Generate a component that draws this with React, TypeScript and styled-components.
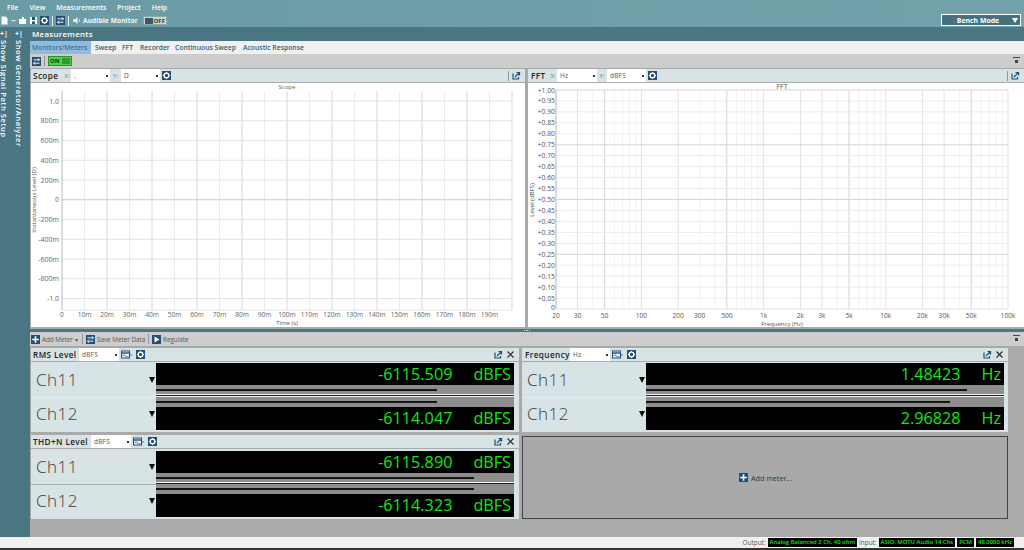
import React from "react";
import styled, { createGlobalStyle } from "styled-components";

const Global = createGlobalStyle`
  html, body { margin: 0; padding: 0; background: #aaa; }
  #root { width: 1024px; height: 550px; overflow: hidden; }
  * { box-sizing: border-box; }
`;
const font = `"Open Sans", "Noto Sans", "Liberation Sans", sans-serif`;

const Page = styled.div`
  width: 1024px; height: 550px; display: flex; flex-direction: column;
  font-family: ${font}; background: #aaa; overflow: hidden;
`;
const TopBand = styled.header`
  height: 27px; flex: none; background: linear-gradient(90deg, #6b9ba5, #73a2ab);
  display: flex; flex-direction: column; position: relative;
`;
const MenuBar = styled.nav`
  height: 14px; display: flex; align-items: center; gap: 11px; padding: 1px 0 0 7px;
  color: #fff; font-size: 6.9px; font-weight: 600;
`;
const QuickBar = styled.div`
  height: 13px; display: flex; align-items: center; gap: 2px; padding-left: 0; color: #f2f6f7;
  font-size: 6.6px; font-weight: 700;
`;
const QuickLabel = styled.span` margin-right: 3px; letter-spacing: .1px; white-space: nowrap; `;
const BenchMode = styled.div`
  position: absolute; right: 3px; top: 14px; width: 80px; height: 12px;
  border: 1px solid #fff; background: #45707c; color: #fff; font-size: 6.9px; font-weight: 700;
  display: flex; align-items: center; justify-content: center; padding-right: 6px;
  &::after { content: ""; position: absolute; right: 2px; top: 3px; border: 3.5px solid transparent; border-top: 5px solid #fff; border-bottom: 0; }
`;
const Sep = styled.span<{ $light?: boolean; $flush?: boolean }>`
  width: 1px; height: 10px; margin: 0 ${p => p.$flush ? 0 : 1}px; flex: none; background: ${p => p.$light ? "#e8eef0" : "#8a9aa0"};
`;
const HeadGap = styled.span` width: 2px; flex: none; `;
const Switch = styled.span<{ $on?: boolean }>`
  width: 24px; height: ${p => p.$on ? 10 : 9}px; display: inline-flex; align-items: center;
  justify-content: space-between; padding: 0 1px; font-size: 6px; font-weight: 700; line-height: 1;
  background: ${p => p.$on ? "#4bd24b" : "#cfd6d8"}; color: ${p => p.$on ? "#0b3d0b" : "#333"};
  border: 1px solid ${p => p.$on ? "#2e8f2e" : "#8aa"};
`;
const SwitchKnob = styled.i<{ $on?: boolean }>`
  width: 8px; height: 6px; background: ${p => p.$on ? "#2b9b2b" : "#3d5660"}; display: block;
`;
const Body = styled.div` flex: 1; min-height: 0; display: flex; `;
const Sidebar = styled.aside`
  width: 30px; flex: none; background: #4a7683; display: flex; padding-top: 3px; color: #fff;
`;
const SideItem = styled.div<{ $w: number }>`
  width: ${p => p.$w}px; flex: none; display: flex; flex-direction: column; align-items: center; gap: 2px;
  font-size: 7.7px; font-weight: 600; letter-spacing: .5px;
`;
const SidePin = styled.span` font-size: 7px; line-height: 8px; font-weight: 700; letter-spacing: 0; `;
const SideText = styled.span` writing-mode: vertical-rl; white-space: nowrap; line-height: 12px; `;
const Main = styled.main` flex: 1; min-width: 0; display: flex; flex-direction: column; `;
const TitleBar = styled.div`
  height: 14px; flex: none; padding-left: 2px; background: #4a7683; color: #fff;
  font-size: 7.9px; font-weight: 600; letter-spacing: .3px; line-height: 14px;
`;
const Tabs = styled.div`
  height: 13px; flex: none; background: #f0f0f0; display: flex; align-items: stretch;
`;
const Tab = styled.div<{ $active?: boolean; $w: number }>`
  width: ${p => p.$w}px; flex: none; padding-left: ${p => p.$active ? 2 : 4}px; line-height: 13px; white-space: nowrap;
  font-size: 6.8px; font-weight: 600; color: ${p => p.$active ? "#4a7283" : "#38606e"};
  background: ${p => p.$active ? "#8fbbe3" : "transparent"};
`;
const MeasureBar = styled.div`
  height: 15px; flex: none; background: #cdcdcd; border-bottom: 1px solid #a4a8a9; display: flex; align-items: center;
  gap: 2px; padding: 0 2px; position: relative;
`;
const ChartsRow = styled.div`
  height: 258px; flex: none; display: flex; gap: 3px; padding-left: 1px; background: #aaa;
`;
const ChartPanel = styled.section<{ $w: number }>`
  width: ${p => p.$w}px; flex: none; display: flex; flex-direction: column; background: #fff;
`;
const PanelHead = styled.div<{ $pad?: number }>`
  height: 14px; flex: none; background: #d8e3e5; border-bottom: 1px solid #a8acae; display: flex; align-items: center;
  padding-left: ${p => p.$pad ?? 2}px; font-size: 8.2px; color: #222; font-weight: 600; letter-spacing: .4px; position: relative;
`;
const HeadTitle = styled.span<{ $w: number }>` width: ${p => p.$w}px; flex: none; white-space: nowrap; `;
const HeadHint = styled.span<{ $w: number }>`
  width: ${p => p.$w}px; flex: none; font-size: 6px; color: #6a7a80; font-weight: 400; letter-spacing: 0; text-align: center;
`;
const Select = styled.span<{ $w: number }>`
  width: ${p => p.$w}px; height: 13px; flex: none; background: #fff; color: #555; font-size: 6.5px; font-weight: 400;
  letter-spacing: .2px; padding-left: 3px; line-height: 13px; position: relative;
  &::after { content: ""; position: absolute; right: 2px; top: 6px; width: 2px; height: 2px; background: #333; }
`;
const HeadTools = styled.div`
  margin-left: auto; display: flex; align-items: center; gap: 3px; padding-right: 4px;
`;
const Square = styled.span<{ $ml?: number }>`
  width: 9px; height: 9px; flex: none; background: #234f75; color: #fff;
  display: inline-flex; align-items: center; justify-content: center; margin-left: ${p => p.$ml ?? 0}px;
`;
const Tiny = styled.svg<{ $s?: number; $ml?: number }>`
  width: ${p => p.$s ?? 9}px; height: ${p => p.$s === 11 ? 9 : p.$s ?? 9}px; display: block; flex: none;
  margin-left: ${p => p.$ml ?? 0}px;
`;
const Plot = styled.svg` display: block; flex: 1; min-height: 0; font-family: ${font}; `;
const Splitter = styled.div`
  height: 5px; flex: none; background: #4a7683; border-top: 2px solid #aaa;
  display: flex; justify-content: center; align-items: center; gap: 1px;
`;
const Grip = styled.i` width: 1.5px; height: 1.5px; background: #c5d4d8; display: block; `;
const MeterBar = styled.div`
  height: 15px; flex: none; background: #cdcdcd; border-bottom: 1px solid #a8a8a8; display: flex; align-items: center;
  padding-left: 1px; gap: 2px; font-size: 6.3px; color: #555; position: relative;
`;
const BarLabel = styled.span<{ $w: number }>` width: ${p => p.$w}px; flex: none; white-space: nowrap; `;
const PinIcon = styled.span`
  position: absolute; right: 4px; top: 3px; width: 7px; height: 6px; border-top: 1px solid #234f75;
  &::after { content: ""; position: absolute; left: 2px; top: 2px; width: 3px; height: 3px; background: #234f75; }
`;
const MeterGrid = styled.div`
  flex: 1; min-height: 0; display: grid; grid-template-columns: 488px 486px; grid-template-rows: 84px 84px;
  column-gap: 3px; row-gap: 3px; padding: 1px 0 0 1px; align-content: start;
`;
const MeterPanel = styled.section` display: flex; flex-direction: column; background: #d8e3e5; min-width: 0; `;
const Rows = styled.div` flex: 1; display: flex; flex-direction: column; `;
const MeterRow = styled.div` height: 35px; flex: none; display: flex; `;
const ChanCell = styled.div<{ $w: number; $line?: string }>`
  width: ${p => p.$w}px; flex: none; display: flex; align-items: center; justify-content: space-between;
  padding: 0 0 ${p => p.$line ? 3 : 0}px 5px;
  font-size: 17px; font-weight: 300; color: #3a3a3a; letter-spacing: .5px;
  border-top: ${p => p.$line ? `1px solid ${p.$line}` : "0"};
`;
const Caret = styled.span`
  border: 3px solid transparent; border-top: 6px solid #111; border-bottom: 0; margin-right: 1px;
`;
const Display = styled.div<{ $top?: number }>`
  width: 358px; flex: none; display: flex; flex-direction: column; padding-top: ${p => p.$top ?? 0}px;
`;
const Readout = styled.div<{ $h: number }>`
  height: ${p => p.$h}px; flex: none; background: #000; color: #14e614; display: flex; justify-content: flex-end; align-items: center;
  font-size: 16.2px; line-height: 1; padding-right: 3px;
`;
const Value = styled.span` margin-right: 21px; `;
const Level = styled.div<{ $h: number }>`
  height: ${p => p.$h}px; flex: none; background: #8d8d8d; display: flex; align-items: center;
`;
const LevelFill = styled.i` display: block; height: 2px; background: #151515; `;
const RowStrip = styled.div`
  flex: 1; display: flex; align-items: center; background: #eef2f3;
  &::before { content: ""; display: block; width: 100%; height: 1px; background: #222; }
`;
const AddPanel = styled.div`
  border: 1px solid #404448; background: #a9a9a9; margin: 1px 0 0; display: flex; align-items: center; justify-content: center;
  gap: 3px; font-size: 7.2px; color: #333; padding-left: 1px;
`;
const Status = styled.footer`
  height: 11px; flex: none; background: #f0f0f0; display: flex; justify-content: flex-end; align-items: center;
  padding-right: 10px; gap: 2px; font-size: 5.9px; color: #555;
`;
const StatusLabel = styled.span` font-size: 6.4px; `;
const StatusCell = styled.span`
  background: #000; color: #16e816; height: 9px; line-height: 9px; padding: 0 2px; font-weight: 600; white-space: nowrap;
`;
const Bottom = styled.div` height: 2px; flex: none; background: #333; `;

const Gear = ({ ml }: { ml?: number }) => (
  <Square $ml={ml}><Tiny viewBox="0 0 10 10"><circle cx="5" cy="5" r="2.6" fill="none" stroke="#fff" strokeWidth="1.5" /><path d="M5 1v1.2M5 7.8V9M1 5h1.2M7.8 5H9M2.2 2.2l.9.9M6.9 6.9l.9.9M7.8 2.2l-.9.9M3.1 6.9l-.9.9" stroke="#fff" strokeWidth="1" /></Tiny></Square>
);
const Popout = () => (
  <Tiny viewBox="0 0 9 9"><path d="M1 2.5V8h5.5V6M3 6l4-4M4.5 1.5H7.5V4.5" fill="none" stroke="#234f75" strokeWidth="1.2" /></Tiny>
);
const Close = () => (
  <Tiny viewBox="0 0 9 9"><path d="M1.5 1.5l6 6M7.5 1.5l-6 6" stroke="#223" strokeWidth="1.1" /></Tiny>
);
const SwapIcon = () => (
  <Square><Tiny viewBox="0 0 9 9"><path d="M1.5 2.8h6M6 1.2l1.5 1.6L6 4.4M7.5 6.2h-6M3 4.6 1.5 6.2 3 7.8" fill="none" stroke="#fff" strokeWidth=".9" /></Tiny></Square>
);
const PlusSq = () => (
  <Square><Tiny viewBox="0 0 9 9"><path d="M4.5 1.2v6.6M1.2 4.5h6.6" stroke="#fff" strokeWidth="1.6" /></Tiny></Square>
);
const RangeIcon = () => (
  <Tiny $s={11} $ml={2} viewBox="0 0 11 9"><rect x=".5" y="1" width="8" height="7" fill="#eaf0f2" stroke="#234f75" /><path d="M.5 3h8" stroke="#234f75" strokeWidth="1.4" /><path d="M1.5 6c1-1.5 2-1.5 3 0s2 1.5 3 0" fill="none" stroke="#234f75" strokeWidth=".7" /><path d="M9 4.5h2L10 6z" fill="#234f75" /></Tiny>
);

const ScopePlot = () => {
  const x0 = 31, y0 = 18, dy = 19.75, dx = 22.5, bottom = 227;
  const yLabels = ["1.0", "800m", "600m", "400m", "200m", "0", "-200m", "-400m", "-600m", "-800m", "-1.0"];
  const xs = Array.from({ length: 20 }, (_, i) => i);
  return (
    <Plot viewBox="0 0 494 244">
      <text x="256" y="6" fontSize="6" textAnchor="middle" fill="#666">Scope</text>
      {xs.map(i => i > 0 && (
        <line key={i} x1={x0 + i * dx} x2={x0 + i * dx} y1={8} y2={bottom} stroke={i % 2 === 0 ? "#d6d6d6" : "#ececec"} />
      ))}
      <line x1={x0 + 20 * dx} x2={x0 + 20 * dx} y1={8} y2={bottom} stroke="#d6d6d6" />
      {yLabels.map((l, i) => (
        <g key={l}>
          <line x1={x0} x2={481} y1={y0 + i * dy} y2={y0 + i * dy} stroke={i === 5 ? "#c8c8c8" : "#e4e4e4"} />
          <text x={x0 - 3} y={y0 + i * dy + 2.5} fontSize="7" textAnchor="end" fill="#666">{l}</text>
        </g>
      ))}
      <line x1={x0} x2={x0} y1={8} y2={bottom} stroke="#bbb" />
      <line x1={x0} x2={481} y1={bottom} y2={bottom} stroke="#e4e4e4" />
      {xs.map(i => (
        <text key={i} x={x0 + i * dx} y={234} fontSize="6.6" textAnchor="middle" fill="#666">{i === 0 ? "0" : `${i * 10}m`}</text>
      ))}
      <text x="256" y="242" fontSize="6" textAnchor="middle" fill="#555">Time (s)</text>
      <text transform="translate(5 117) rotate(-90)" fontSize="6" textAnchor="middle" fill="#555">Instantaneous Level (D)</text>
    </Plot>
  );
};

const FftPlot = () => {
  const x0 = 28, bottom = 226, top = 7, dy = 10.95;
  const fx = (f: number) => x0 + Math.log10(f / 20) * 122.2;
  const freqs: number[] = [];
  [10, 100, 1000, 10000].forEach(d => [1, 2, 3, 4, 5, 6, 7, 8, 9].forEach(m => { const f = d * m; if (f >= 20) freqs.push(f); }));
  freqs.push(100000);
  const labels: [number, string][] = [[20, "20"], [30, "30"], [50, "50"], [100, "100"], [200, "200"], [300, "300"], [500, "500"], [1000, "1k"], [2000, "2k"], [3000, "3k"], [5000, "5k"], [10000, "10k"], [20000, "20k"], [30000, "30k"], [50000, "50k"], [100000, "100k"]];
  const ticks = Array.from({ length: 21 }, (_, i) => i);
  const strong = [50, 500, 5000, 50000];
  const mid = [30, 100, 200, 1000, 2000, 3000, 10000, 20000, 30000, 100000];
  return (
    <Plot viewBox="0 0 496 244">
      <text x="254" y="6" fontSize="7" textAnchor="middle" fill="#555">FFT</text>
      {freqs.map(f => (
        <line key={f} x1={fx(f)} x2={fx(f)} y1={top} y2={bottom} stroke={strong.includes(f) ? "#d4d4d4" : mid.includes(f) ? "#e2e2e2" : "#f2f2f2"} />
      ))}
      {ticks.map(i => {
        const y = top + i * dy;
        const v = 1 - i * 0.05;
        return (
          <g key={i}>
            {i < 20 && <line x1={x0} x2={480} y1={y} y2={y} stroke={i % 5 === 0 ? "#d4d4d4" : "#ececec"} />}
            <text x={x0 - 1} y={i === 20 ? y + 0.5 : y + 2.5} fontSize="6.8" textAnchor="end" fill="#555">{i === 20 ? "0" : `+${v.toFixed(2)}`}</text>
          </g>
        );
      })}
      <line x1={x0} x2={x0} y1={top} y2={bottom} stroke="#bbb" />
      <line x1={x0} x2={480} y1={bottom} y2={bottom} stroke="#e0e0e0" />
      {labels.map(([f, l]) => (
        <text key={f} x={fx(f)} y={235} fontSize="6.6" textAnchor="middle" fill="#555">{l}</text>
      ))}
      <text x="254" y="243" fontSize="6" textAnchor="middle" fill="#555">Frequency (Hz)</text>
      <text transform="translate(6 117) rotate(-90)" fontSize="6" textAnchor="middle" fill="#444">Level (dBFS)</text>
    </Plot>
  );
};

type Meter = {
  title: string; titleW: number; unit: string; selectW: number; values: [string, string];
  fill: [number, number]; line: string; cell: number; pad: number; top: number; gearGap: number;
};
const MeterBlock = ({ m }: { m: Meter }) => (
  <MeterPanel>
    <PanelHead $pad={m.pad}>
      <HeadTitle $w={m.titleW}>{m.title}</HeadTitle>
      <Select $w={m.selectW}>{m.unit === "Hz" ? "Hz" : "dBFS"}</Select>
      <RangeIcon />
      <Gear ml={m.gearGap} />
      <HeadTools>
        <Popout />
        <Close />
      </HeadTools>
    </PanelHead>
    <Rows>
      <MeterRow>
        <ChanCell $w={m.cell}>Ch11<Caret /></ChanCell>
        <Display $top={m.top}>
          <Readout $h={22}><Value>{m.values[0]}</Value>{m.unit}</Readout>
          <Level $h={9}><LevelFill style={{ width: m.fill[0] }} /></Level>
          <RowStrip />
        </Display>
      </MeterRow>
      <MeterRow>
        <ChanCell $w={m.cell} $line={m.line}>Ch12<Caret /></ChanCell>
        <Display>
          <Level $h={10}><LevelFill style={{ width: m.fill[1] }} /></Level>
          <Readout $h={23}><Value>{m.values[1]}</Value>{m.unit}</Readout>
        </Display>
      </MeterRow>
    </Rows>
  </MeterPanel>
);

const meters: Meter[] = [
  { title: "RMS Level", titleW: 46, unit: "dBFS", selectW: 40, values: ["-6115.509", "-6114.047"], fill: [281, 281], line: "#e4ebec", cell: 125, pad: 2, top: 1, gearGap: 4 },
  { title: "Frequency", titleW: 45, unit: "Hz", selectW: 40, values: ["1.48423", "2.96828"], fill: [321, 304], line: "#e4ebec", cell: 124, pad: 3, top: 1, gearGap: 4 },
  { title: "THD+N Level", titleW: 58, unit: "dBFS", selectW: 40, values: ["-6115.890", "-6114.323"], fill: [318, 318], line: "#a8b0b2", cell: 125, pad: 2, top: 2, gearGap: 4 },
];

export default function App() {
  return (
    <Page>
      <Global />
      <TopBand>
        <MenuBar>
          <span>File</span><span>View</span><span>Measurements</span><span>Project</span><span>Help</span>
        </MenuBar>
        <QuickBar>
          <Tiny viewBox="0 0 9 9"><path d="M1.5.5h4l2 2v6h-6z" fill="#fff" /></Tiny>
          <Tiny $s={5} viewBox="0 0 5 5"><path d="M.5 2.2h4v1h-4z" fill="#fff" /></Tiny>
          <Tiny viewBox="0 0 9 9"><path d="M1 3h3V1h2v2h2v5H1z" fill="#fff" /></Tiny>
          <Tiny viewBox="0 0 9 9"><path d="M1 1h7v7H1z" fill="#fff" /><path d="M3 1v3h3V1M3 8V5.5h3V8" fill="#234f75" /></Tiny>
          <Gear />
          <Sep $light />
          <SwapIcon />
          <Sep $light />
          <Tiny viewBox="0 0 9 9"><path d="M1 3.2h2L5.5 1v7L3 5.8H1z" fill="#e8f0f2" /><path d="M6.8 3c.8.8.8 2.2 0 3" fill="none" stroke="#e8f0f2" /></Tiny>
          <QuickLabel>Audible Monitor</QuickLabel>
          <Switch><SwitchKnob />OFF</Switch>
        </QuickBar>
        <BenchMode>Bench Mode</BenchMode>
      </TopBand>
      <Body>
        <Sidebar>
          <SideItem $w={8}><SidePin>+|</SidePin><SideText>Show Signal Path Setup</SideText></SideItem>
          <SideItem $w={22}><SidePin>+|</SidePin><SideText>Show Generator/Analyzer</SideText></SideItem>
        </Sidebar>
        <Main>
          <TitleBar>Measurements</TitleBar>
          <Tabs>
            <Tab $active $w={61}>Monitors/Meters</Tab>
            <Tab $w={27}>Sweep</Tab>
            <Tab $w={18}>FFT</Tab>
            <Tab $w={35}>Recorder</Tab>
            <Tab $w={68}>Continuous Sweep</Tab>
            <Tab $w={70}>Acoustic Response</Tab>
          </Tabs>
          <MeasureBar>
            <SwapIcon />
            <Sep />
            <Switch $on>ON<SwitchKnob $on /></Switch>
            <PinIcon />
          </MeasureBar>
          <ChartsRow>
            <ChartPanel $w={494}>
              <PanelHead>
                <HeadTitle $w={30}>Scope</HeadTitle>
                <HeadHint $w={8}>X:</HeadHint>
                <Select $w={39}>.</Select>
                <HeadHint $w={11}>Y:</HeadHint>
                <Select $w={39}>D</Select>
                <HeadGap />
                <Gear />
                <HeadTools><Sep $flush /><Popout /></HeadTools>
              </PanelHead>
              <ScopePlot />
            </ChartPanel>
            <ChartPanel $w={496}>
              <PanelHead $pad={3}>
                <HeadTitle $w={18}>FFT</HeadTitle>
                <HeadHint $w={8}>X:</HeadHint>
                <Select $w={40}>Hz</Select>
                <HeadHint $w={10}>Y:</HeadHint>
                <Select $w={39}>dBFS</Select>
                <HeadGap />
                <Gear />
                <HeadTools><Sep $flush /><Popout /></HeadTools>
              </PanelHead>
              <FftPlot />
            </ChartPanel>
          </ChartsRow>
          <Splitter><Grip /><Grip /><Grip /></Splitter>
          <MeterBar>
            <PlusSq />
            <BarLabel $w={37}>Add Meter ▾</BarLabel>
            <Sep />
            <SwapIcon />
            <BarLabel $w={48}>Save Meter Data</BarLabel>
            <Sep />
            <Square><Tiny viewBox="0 0 9 9"><path d="M2.5 1.5l5 3-5 3z" fill="#fff" /></Tiny></Square>
            <BarLabel $w={40}>Regulate</BarLabel>
            <PinIcon />
          </MeterBar>
          <MeterGrid>
            <MeterBlock m={meters[0]} />
            <MeterBlock m={meters[1]} />
            <MeterBlock m={meters[2]} />
            <AddPanel><PlusSq />Add meter...</AddPanel>
          </MeterGrid>
        </Main>
      </Body>
      <Status>
        <StatusLabel>Output:</StatusLabel>
        <StatusCell>Analog Balanced 2 Ch, 40 ohm</StatusCell>
        <StatusLabel>Input:</StatusLabel>
        <StatusCell>ASIO: MOTU Audio 14 Chs</StatusCell>
        <StatusCell>PCM</StatusCell>
        <StatusCell>48.0000 kHz</StatusCell>
      </Status>
      <Bottom />
    </Page>
  );
}
